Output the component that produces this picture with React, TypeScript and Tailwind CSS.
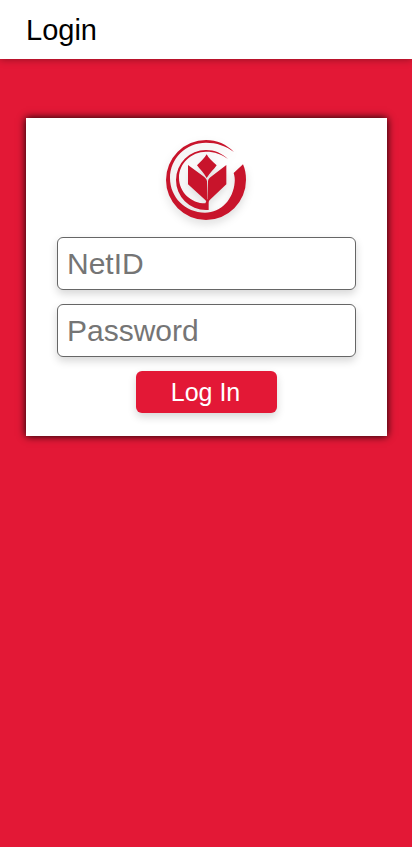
import React from "react";

function TulipLogo() {
  return (
    <svg
      viewBox="0 0 243 240"
      role="img"
      aria-label="Tulip logo"
      className="h-20 w-[81px] overflow-visible fill-[#c8142b] drop-shadow-[0_4px_4px_rgba(0,0,0,0.14)]"
    >
      <path d="M204 36C182 13 152 0 120 0A120 120 0 0 0 0 120A120 120 0 0 0 120 240A120 120 0 0 0 240 120C240 102 237 87 231 73L203 99C206 109 207 117 206 127C202 178 166 218 117 218C58 218 12 172 12 114C12 55 60 8 120 8C152 8 180 18 204 36Z" />
      <path d="M186 57C168 40 146 30 120 30A90 90 0 0 0 30 120A90 90 0 0 0 120 210L128 210L128 178L124 178L118 190C75 190 39 156 39 113C39 70 76 35 120 35C146 35 168 43 186 57Z" />
      <path d="M66 75L112 109C119 114 122 118 123 124L125 192C123 186 121 183 117 179L66 133Z" />
      <path d="M181 75L137 109C129 114 127 118 126 124L125 192C126 186 128 183 132 179L181 133Z" />
      <path d="M122 43C127 55 140 64 152 76C144 88 132 98 122 114C113 98 102 88 93 76C104 64 116 55 122 43Z" />
    </svg>
  );
}

const fieldClass =
  "block h-[53px] w-full rounded-md border border-[#666] bg-white px-[9px] text-[30px] text-black shadow-[0_4px_8px_rgba(0,0,0,0.16)] placeholder:text-[#757575]";

export default function App() {
  return (
    <div className="flex min-h-screen flex-col bg-[#e31836] font-['Liberation_Sans',Arial,sans-serif]">
      <header className="flex h-[59px] items-center bg-white px-[26px] pt-0.5 shadow-[0_0_8px_rgba(0,0,0,0.4)]">
        <h1 className="text-[29px] text-black">Login</h1>
      </header>
      <main className="pt-[59px] pr-[25px] pl-[26px]">
        <form
          className="flex flex-col items-center bg-white px-[31px] pt-[22px] pb-[23px] shadow-[0_0_8px_#000]"
          onSubmit={(event: React.FormEvent) => event.preventDefault()}
        >
          <TulipLogo />
          <div className="mt-[17px] mb-3.5 flex w-full flex-col gap-3.5">
            <input type="text" aria-label="NetID" placeholder="NetID" autoComplete="username" className={fieldClass} />
            <input type="password" aria-label="Password" placeholder="Password" autoComplete="current-password" className={fieldClass} />
          </div>
          <button
            type="submit"
            className="h-[42px] w-[141px] rounded-md bg-[#e31836] pt-0.5 pr-0.5 text-[25px] text-white shadow-[0_4px_8px_rgba(0,0,0,0.16)]"
          >
            Log In
          </button>
        </form>
      </main>
    </div>
  );
}
